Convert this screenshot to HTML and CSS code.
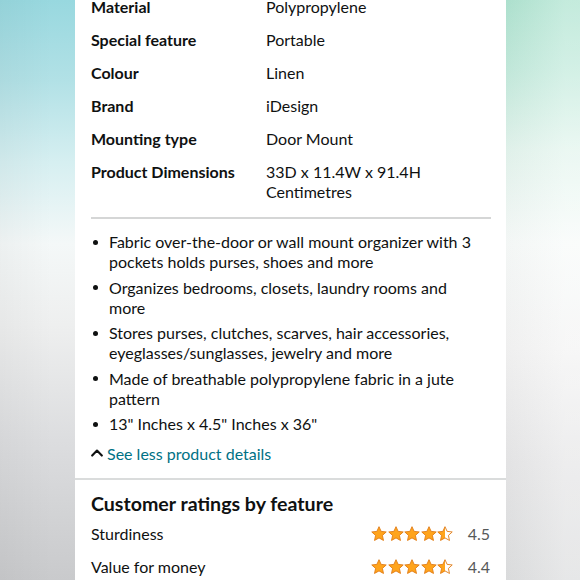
FILE: index.html
```html
<!DOCTYPE html>
<html lang="en">
<head>
<meta charset="utf-8">
<title>Product details</title>
<link rel="stylesheet" href="styles.css">
</head>
<body>
<div class="screen">
  <div class="side side-left"></div>
  <main class="panel">
    <section class="card details">
      <dl class="specs">
        <div class="spec-row"><dt>Material</dt><dd>Polypropylene</dd></div>
        <div class="spec-row"><dt>Special feature</dt><dd>Portable</dd></div>
        <div class="spec-row"><dt>Colour</dt><dd>Linen</dd></div>
        <div class="spec-row"><dt>Brand</dt><dd>iDesign</dd></div>
        <div class="spec-row"><dt>Mounting type</dt><dd>Door Mount</dd></div>
        <div class="spec-row"><dt>Product Dimensions</dt><dd>33D x 11.4W x 91.4H Centimetres</dd></div>
      </dl>
      <hr class="rule">
      <ul class="bullets">
        <li>Fabric over-the-door or wall mount organizer with 3 pockets holds purses, shoes and more</li>
        <li>Organizes bedrooms, closets, laundry rooms and more</li>
        <li>Stores purses, clutches, scarves, hair accessories, eyeglasses/sunglasses, jewelry and more</li>
        <li>Made of breathable polypropylene fabric in a jute pattern</li>
        <li>13" Inches x 4.5" Inches x 36"</li>
      </ul>
      <a class="see-less" href="#">
        <svg class="chev" width="12" height="8" viewBox="0 0 12 8" aria-hidden="true"><polyline points="1.2,6.6 6,1.6 10.8,6.6" fill="none" stroke="#0f1111" stroke-width="2.1" stroke-linecap="round" stroke-linejoin="round"/></svg>
        <span>See less product details</span>
      </a>
    </section>
    <section class="card ratings">
      <h2 class="ratings-title">Customer ratings by feature</h2>
      <div class="rating-row">
        <span class="rating-label">Sturdiness</span>
        <span class="stars">
          <svg viewBox="0 0 16 16" class="star"><path class="full" d="M8 0.7 L10.12 5.39 L15.23 5.95 L11.42 9.41 L12.47 14.45 L8 11.9 L3.53 14.45 L4.58 9.41 L0.77 5.95 L5.88 5.39 Z"/></svg>
          <svg viewBox="0 0 16 16" class="star"><path class="full" d="M8 0.7 L10.12 5.39 L15.23 5.95 L11.42 9.41 L12.47 14.45 L8 11.9 L3.53 14.45 L4.58 9.41 L0.77 5.95 L5.88 5.39 Z"/></svg>
          <svg viewBox="0 0 16 16" class="star"><path class="full" d="M8 0.7 L10.12 5.39 L15.23 5.95 L11.42 9.41 L12.47 14.45 L8 11.9 L3.53 14.45 L4.58 9.41 L0.77 5.95 L5.88 5.39 Z"/></svg>
          <svg viewBox="0 0 16 16" class="star"><path class="full" d="M8 0.7 L10.12 5.39 L15.23 5.95 L11.42 9.41 L12.47 14.45 L8 11.9 L3.53 14.45 L4.58 9.41 L0.77 5.95 L5.88 5.39 Z"/></svg>
          <svg viewBox="0 0 16 16" class="star"><defs><linearGradient id="half1" x1="0" y1="0" x2="1" y2="0"><stop offset="0.5" stop-color="#ffa41c"/><stop offset="0.5" stop-color="#ffffff"/></linearGradient></defs><path fill="url(#half1)" class="half" d="M8 0.7 L10.12 5.39 L15.23 5.95 L11.42 9.41 L12.47 14.45 L8 11.9 L3.53 14.45 L4.58 9.41 L0.77 5.95 L5.88 5.39 Z"/></svg>
        </span>
        <span class="rating-value">4.5</span>
      </div>
      <div class="rating-row">
        <span class="rating-label">Value for money</span>
        <span class="stars">
          <svg viewBox="0 0 16 16" class="star"><path class="full" d="M8 0.7 L10.12 5.39 L15.23 5.95 L11.42 9.41 L12.47 14.45 L8 11.9 L3.53 14.45 L4.58 9.41 L0.77 5.95 L5.88 5.39 Z"/></svg>
          <svg viewBox="0 0 16 16" class="star"><path class="full" d="M8 0.7 L10.12 5.39 L15.23 5.95 L11.42 9.41 L12.47 14.45 L8 11.9 L3.53 14.45 L4.58 9.41 L0.77 5.95 L5.88 5.39 Z"/></svg>
          <svg viewBox="0 0 16 16" class="star"><path class="full" d="M8 0.7 L10.12 5.39 L15.23 5.95 L11.42 9.41 L12.47 14.45 L8 11.9 L3.53 14.45 L4.58 9.41 L0.77 5.95 L5.88 5.39 Z"/></svg>
          <svg viewBox="0 0 16 16" class="star"><path class="full" d="M8 0.7 L10.12 5.39 L15.23 5.95 L11.42 9.41 L12.47 14.45 L8 11.9 L3.53 14.45 L4.58 9.41 L0.77 5.95 L5.88 5.39 Z"/></svg>
          <svg viewBox="0 0 16 16" class="star"><defs><linearGradient id="half2" x1="0" y1="0" x2="1" y2="0"><stop offset="0.5" stop-color="#ffa41c"/><stop offset="0.5" stop-color="#ffffff"/></linearGradient></defs><path fill="url(#half2)" class="half" d="M8 0.7 L10.12 5.39 L15.23 5.95 L11.42 9.41 L12.47 14.45 L8 11.9 L3.53 14.45 L4.58 9.41 L0.77 5.95 L5.88 5.39 Z"/></svg>
        </span>
        <span class="rating-value">4.4</span>
      </div>
    </section>
  </main>
  <div class="side side-right"></div>
</div>
</body>
</html>
```
FILE: styles.css
```css
* { box-sizing: border-box; }

html, body {
  margin: 0;
  padding: 0;
  width: 580px;
  height: 580px;
  overflow: hidden;
  background: #ffffff;
}

body {
  font-family: "Lato", "Liberation Sans", sans-serif;
  font-size: 16px;
  color: #0f1111;
}

.screen {
  display: flex;
  width: 580px;
  height: 580px;
}

.side {
  flex: 0 0 auto;
  height: 580px;
}

.side-left {
  width: 75px;
  background:
    linear-gradient(90deg, rgba(0,0,0,0.03), rgba(255,255,255,0) 70%),
    linear-gradient(180deg, #98d8df 0%, #b2e1e6 14%, #d6eff1 28%, #f4f8f8 42%, #eeefef 56%, #dcdddf 76%, #c9cacc 100%);
}

.side-right {
  width: 74px;
  background:
    linear-gradient(90deg, rgba(0,0,0,0.02), rgba(255,255,255,0.25) 80%),
    linear-gradient(180deg, #b0e4d1 0%, #c4ebdd 12%, #e4f5ee 26%, #f8fbfa 42%, #f4f4f4 60%, #e7e7e8 80%, #dedfe0 100%);
}

.panel {
  flex: 0 0 431px;
  width: 431px;
  height: 580px;
  background: #dadcdc;
  overflow: hidden;
}

.card {
  background: #ffffff;
}

.details {
  padding: 0 15px 14.4px 16px;
}

.specs {
  margin: -9.4px 0 0 0;
  padding: 0;
}

.spec-row {
  display: grid;
  grid-template-columns: 175px 1fr;
  padding: 6.3px 0;
  line-height: 20.4px;
}

.spec-row dt {
  font-weight: 700;
}

.spec-row dd {
  margin: 0;
}

.rule {
  margin: 8.2px 0 0 0;
  border: 0;
  height: 2px;
  background: #d5d6d6;
}

.bullets {
  list-style: none;
  margin: 12.8px 0 0 0;
  padding: 0 10px 0 18px;
  line-height: 20px;
}

.bullets li {
  position: relative;
}

.bullets li + li {
  margin-top: 5.5px;
}

.bullets li::before {
  content: "";
  position: absolute;
  left: -16px;
  top: 7.8px;
  width: 5px;
  height: 5px;
  border-radius: 50%;
  background: #0f1111;
}

.see-less {
  display: flex;
  align-items: center;
  gap: 4px;
  margin-top: 9.5px;
  line-height: 20px;
  color: #007185;
  text-decoration: none;
}

.chev {
  display: block;
  margin-top: -2px;
}

.ratings {
  margin-top: 2px;
  padding: 12.5px 16px 0 16px;
  height: 200px;
}

.ratings-title {
  margin: 0 0 1.5px 0;
  font-size: 19.6px;
  line-height: 24px;
  font-weight: 700;
}

.rating-row {
  display: flex;
  align-items: center;
  padding: 6.5px 0;
  line-height: 20px;
}

.rating-label {
  flex: 1 1 auto;
}

.stars {
  display: flex;
  gap: 0.5px;
  margin-right: 14px;
  margin-top: -1px;
}

.star {
  display: block;
  width: 16px;
  height: 16px;
}

.star path {
  stroke: #e07b14;
  stroke-width: 0.9;
  stroke-linejoin: round;
}

.star .full {
  fill: #ffa41c;
}

.rating-value {
  color: #565959;
  min-width: 23px;
  text-align: right;
}
```
